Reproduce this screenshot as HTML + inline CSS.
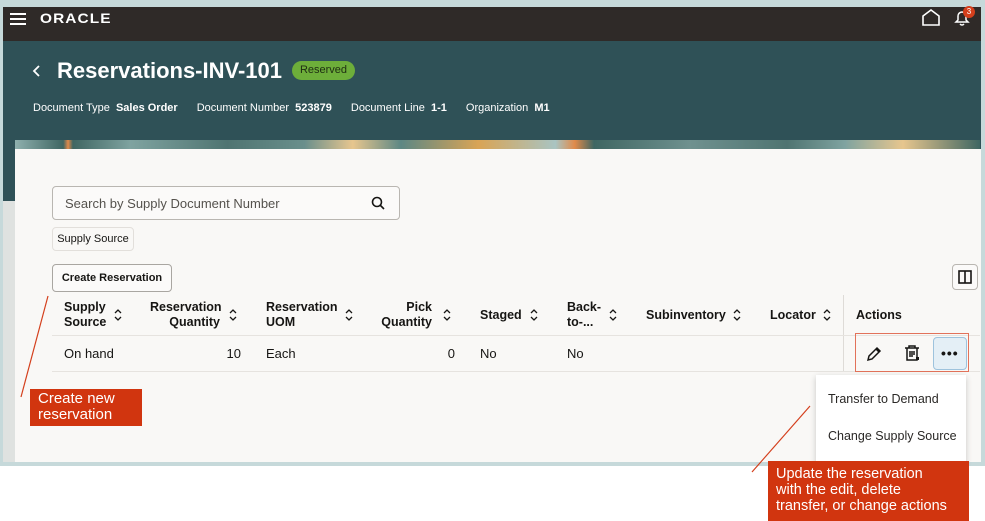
<!DOCTYPE html>
<html><head><meta charset="utf-8"><style>
*{margin:0;padding:0;box-sizing:border-box}
body{width:985px;height:521px;background:#fff;position:relative;overflow:hidden;font-family:"Liberation Sans",sans-serif;color:#161513}
.a{position:absolute}
.th{position:absolute;font-size:12.5px;font-weight:bold;line-height:15px;color:#161513}
.td{position:absolute;font-size:13px;color:#161513}
.sort{position:absolute;width:8px;height:12px}
</style></head><body>
<div class="a" style="left:0;top:0;width:985px;height:466px;background:#c6d9da"></div>
<div class="a" style="left:3px;top:7px;width:978px;height:34px;background:#2f2a28"></div>
<div class="a" style="left:3px;top:41px;width:978px;height:160px;background:#2f5157"></div>
<div class="a" style="left:3px;top:201px;width:12px;height:261px;background:#dfe2e0"></div>
<!-- menu -->
<div class="a" style="left:10px;top:13px;width:16px;height:2px;background:#fff"></div>
<div class="a" style="left:10px;top:18px;width:16px;height:2px;background:#fff"></div>
<div class="a" style="left:10px;top:23px;width:16px;height:2px;background:#fff"></div>
<div class="a" style="left:40px;top:10px;color:#fff;font-size:14px;letter-spacing:1px;font-weight:bold;transform:scaleX(1.1);transform-origin:left">ORACLE</div>
<svg class="a" style="left:921px;top:9px" width="20" height="18" viewBox="0 0 20 18"><path d="M2 16 V7 L10 1 L18 7 V16 Z" fill="none" stroke="#fff" stroke-width="1.6"/></svg>
<svg class="a" style="left:953px;top:9px" width="18" height="18" viewBox="0 0 18 18"><path d="M3 13 H15 L13 11 V7 A4 4 0 0 0 5 7 V11 Z M7 15 Q9 17 11 15" fill="none" stroke="#fff" stroke-width="1.5"/></svg>
<div class="a" style="left:963px;top:6px;width:12px;height:12px;border-radius:50%;background:#d43f1c;color:#fff;font-size:8px;text-align:center;line-height:12px">3</div>
<!-- title -->
<svg class="a" style="left:32px;top:64px" width="10" height="14"><path d="M7 2 L2 7 L7 12" fill="none" stroke="#fff" stroke-width="1.8"/></svg>
<div class="a" style="left:57px;top:58px;color:#fff;font-size:22px;font-weight:bold">Reservations-INV-101</div>
<div class="a" style="left:292px;top:61px;width:63px;height:19px;border-radius:10px;background:#6dae3a;color:#1e2d12;font-size:11px;text-align:center;line-height:19px">Reserved</div>
<div class="a" style="left:33px;top:102px;color:#fff;font-size:11px;white-space:nowrap">Document Type&nbsp; <b>Sales Order</b><span style="margin-left:19px">Document Number&nbsp; <b>523879</b></span><span style="margin-left:19px">Document Line&nbsp; <b>1-1</b></span><span style="margin-left:19px">Organization&nbsp; <b>M1</b></span></div>
<!-- pattern strip -->
<div class="a" style="left:15px;top:140px;width:965px;height:9px;background:linear-gradient(90deg,#8fb0ae 0,#3f6662 5%,#e08a4a 5.5%,#3f6662 6%,#7fa3a0 12%,#4f7471 22%,#6a8f8c 30%,#e7c68e 35%,#5d8784 40%,#d9a455 48%,#a9c4c2 56%,#e08a4a 58%,#3f6662 60%,#6f918f 70%,#4f7471 80%,#7fa3a0 86%,#e7c68e 92%,#3f6662 100%)"></div>
<div class="a" style="left:15px;top:149px;width:966px;height:313px;background:#f9f8f6"></div>
<!-- search -->
<div class="a" style="left:52px;top:186px;width:348px;height:34px;border:1px solid #b9b6b1;border-radius:4px;background:#fbfaf9"></div>
<div class="a" style="left:65px;top:196px;font-size:13px;color:#55524d">Search by Supply Document Number</div>
<svg class="a" style="left:371px;top:196px" width="14" height="14"><circle cx="6" cy="6" r="4.5" fill="none" stroke="#161513" stroke-width="1.6"/><path d="M9.5 9.5 L13 13" stroke="#161513" stroke-width="1.6"/></svg>
<div class="a" style="left:52px;top:227px;width:82px;height:24px;border:1px solid #e2dfdb;border-radius:4px;font-size:11px;line-height:22px;text-align:center;color:#161513">Supply Source</div>
<div class="a" style="left:52px;top:264px;width:120px;height:28px;border:1px solid #a9a6a1;border-radius:4px;background:#fbfaf9;font-size:11px;font-weight:bold;line-height:26px;text-align:center">Create Reservation</div>
<!-- column button -->
<div class="a" style="left:952px;top:264px;width:26px;height:26px;border:1px solid #b9b6b1;border-radius:4px;background:#fbfaf9"></div>
<svg class="a" style="left:958px;top:270px" width="14" height="14"><rect x="1" y="1" width="12" height="12" fill="none" stroke="#161513" stroke-width="1.6"/><path d="M7 1 V13" stroke="#161513" stroke-width="1.6"/></svg>
<!-- table headers -->
<div class="th" style="left:64px;top:300px">Supply<br>Source</div>
<div class="th" style="left:150px;top:300px;text-align:right;width:70px">Reservation<br>Quantity</div>
<div class="th" style="left:266px;top:300px">Reservation<br>UOM</div>
<div class="th" style="left:372px;top:300px;text-align:right;width:60px">Pick<br>Quantity</div>
<div class="th" style="left:480px;top:308px">Staged</div>
<div class="th" style="left:567px;top:300px">Back-<br>to-...</div>
<div class="th" style="left:646px;top:308px">Subinventory</div>
<div class="th" style="left:770px;top:308px">Locator</div>
<div class="th" style="left:856px;top:308px">Actions</div>
<svg width="0" height="0" style="position:absolute"><defs><path id="s" d="M1 4 L4 1 L7 4 M1 8 L4 11 L7 8" fill="none" stroke="#161513" stroke-width="1.3"/></defs></svg>
<svg class="sort" style="left:114px;top:309px"><use href="#s"/></svg>
<svg class="sort" style="left:229px;top:309px"><use href="#s"/></svg>
<svg class="sort" style="left:345px;top:309px"><use href="#s"/></svg>
<svg class="sort" style="left:443px;top:309px"><use href="#s"/></svg>
<svg class="sort" style="left:530px;top:309px"><use href="#s"/></svg>
<svg class="sort" style="left:609px;top:309px"><use href="#s"/></svg>
<svg class="sort" style="left:733px;top:309px"><use href="#s"/></svg>
<svg class="sort" style="left:823px;top:309px"><use href="#s"/></svg>
<div class="a" style="left:843px;top:295px;width:1px;height:77px;background:#dedbd7"></div>
<div class="a" style="left:52px;top:335px;width:928px;height:1px;background:#e6e3df"></div>
<div class="a" style="left:52px;top:371px;width:928px;height:1px;background:#e6e3df"></div>
<div class="td" style="left:64px;top:346px">On hand</div>
<div class="td" style="left:200px;top:346px;width:41px;text-align:right">10</div>
<div class="td" style="left:266px;top:346px">Each</div>
<div class="td" style="left:420px;top:346px;width:35px;text-align:right">0</div>
<div class="td" style="left:480px;top:346px">No</div>
<div class="td" style="left:567px;top:346px">No</div>
<!-- actions -->
<div class="a" style="left:855px;top:333px;width:114px;height:39px;border:1px solid #e2725a"></div>
<svg class="a" style="left:865px;top:345px" width="18" height="18"><path d="M3 15 L4 11 L12 3 L15 6 L7 14 Z M11 4 L14 7" fill="none" stroke="#161513" stroke-width="1.5"/></svg>
<svg class="a" style="left:903px;top:344px" width="18" height="18"><path d="M2 4 H16 M6 4 V2 H12 V4 M4 4 V16 H14 V4 M7 7 V13 M9 7 V13 M11 7 V11" fill="none" stroke="#161513" stroke-width="1.5"/><rect x="13" y="13" width="3" height="3" fill="#161513"/></svg>
<div class="a" style="left:933px;top:337px;width:34px;height:33px;border:1px solid #9ec3dd;border-radius:4px;background:#e4eff6"></div>
<div class="a" style="left:941px;top:345px;font-size:14px;font-weight:bold;letter-spacing:1px">•••</div>
<!-- menu -->
<div class="a" style="left:816px;top:375px;width:150px;height:88px;background:#fff;box-shadow:0 2px 6px rgba(0,0,0,.2)"></div>
<div class="a" style="left:828px;top:392px;font-size:12.5px;color:#2a2826">Transfer to Demand</div>
<div class="a" style="left:828px;top:429px;font-size:12.5px;color:#2a2826">Change Supply Source</div>
<!-- callouts -->
<svg class="a" style="left:0;top:0" width="985" height="521"><path d="M48 296 L21 397" stroke="#d43f1c" stroke-width="1.2"/><path d="M810 406 L752 472" stroke="#d43f1c" stroke-width="1.2"/></svg>
<div class="a" style="left:30px;top:389px;width:112px;height:37px;background:#d1350f;color:#fff;font-size:15px;line-height:16px;padding:2px 8px;white-space:nowrap">Create new<br>reservation</div>
<div class="a" style="left:768px;top:461px;width:201px;height:60px;background:#d1350f;color:#fff;font-size:14.5px;line-height:16px;padding:5px 8px;white-space:nowrap">Update the reservation<br>with the edit, delete<br>transfer, or change actions</div>
</body></html>
